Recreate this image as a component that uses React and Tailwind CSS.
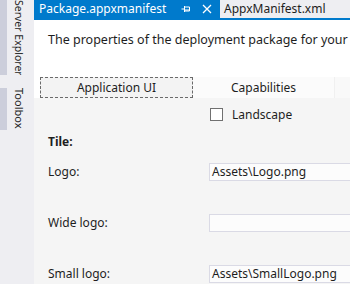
import React from "react";

const font = { fontFamily: '"Segoe UI", "Noto Sans", "Open Sans", sans-serif' };

function Field({ label, value, labelClass = "" }) {
  return (
    <div className="flex items-center h-[18px]">
      <div className={`w-[161px] shrink-0 text-[12px] text-[#1e1e1e] ${labelClass}`}>{label}</div>
      <div className="w-[160px] shrink-0 h-[18px] border border-[#dadae5] bg-[#fcfcfc] flex items-center pl-[2px] text-[12px] text-[#1e1e1e] leading-none">
        {value}
      </div>
    </div>
  );
}

export default function App() {
  return (
    <div className="w-[350px] h-[284px] overflow-hidden flex bg-[#eeeef2]" style={font}>
      {/* auto-hide strip */}
      <div className="w-[34px] shrink-0 flex flex-col bg-[#eeeef2]">
        <div className="h-[75px] flex border-l-[7px] border-[#cccedb] pl-[5px] overflow-hidden">
          <span className="text-[10.5px] leading-[14px] text-[#1e1e1e] [writing-mode:vertical-rl] whitespace-nowrap">
            Server Explorer
          </span>
        </div>
        <div className="mt-[13px] h-[42px] flex border-l-[7px] border-[#cccedb] pl-[5px]">
          <span className="text-[11px] leading-[14px] text-[#1e1e1e] [writing-mode:vertical-rl] whitespace-nowrap">
            Toolbox
          </span>
        </div>
      </div>

      {/* main document */}
      <div className="flex-1 flex flex-col min-w-0">
        <div className="h-[18px] flex shrink-0">
          <div className="w-[186px] shrink-0 bg-[#007acc] text-white flex items-center pl-[5px] text-[12px]">
            <span className="whitespace-nowrap">Package.appxmanifest</span>
            <span className="ml-auto mr-[8px] flex items-center gap-[11px]">
              <svg width="10" height="10" viewBox="0 0 10 10" fill="none" stroke="white" strokeWidth="1">
                <path d="M0.5 5h3M3.5 2v6M3.5 3h5M3.5 7h5M8.5 3v4M3.5 6h5" />
              </svg>
              <svg width="10" height="10" viewBox="0 0 10 10" fill="none" stroke="white" strokeWidth="1.3">
                <path d="M1 1l8 8M9 1l-8 8" />
              </svg>
            </span>
          </div>
          <div className="flex-1 bg-[#eeeef2] text-[#1e1e1e] flex items-center pl-[4px] text-[12px] whitespace-nowrap">
            AppxManifest.xml
          </div>
        </div>
        <div className="h-[2px] bg-[#007acc] shrink-0" />

        <div className="bg-white shrink-0 h-[57px] pl-[14px] pt-[11px]">
          <div className="text-[12.5px] text-[#1e1e1e] whitespace-nowrap">
            The properties of the deployment package for your app are contained in
          </div>
        </div>

        <div className="flex h-[21px] shrink-0 bg-white">
          <div className="w-[6px] bg-white" />
          <div className="w-[153px] border border-dashed border-[#6a6a6a] bg-[#f3f3f3] flex items-center justify-center text-[12px] text-[#1e1e1e]">
            Application UI
          </div>
          <div className="w-[141px] bg-[#fbfbfb] flex items-center justify-center text-[12px] text-[#1e1e1e]">
            Capabilities
          </div>
          <div className="flex-1 bg-[#f9f9f9] border-l border-[#f0f0f0]" />
        </div>

        <div className="flex-1 bg-[#f5f5f5] pl-[14px]">
          <div className="flex items-center h-[13px] mt-[10px] ml-[162px]">
            <div className="w-[13px] h-[13px] border border-[#707070] bg-white" />
            <span className="ml-[9px] text-[12px] text-[#1e1e1e]">Landscape</span>
          </div>
          <div className="mt-[13px] text-[12px] font-bold text-[#1e1e1e] h-[16px] leading-[16px]">Tile:</div>
          <div className="mt-[13px]">
            <Field label="Logo:" value="Assets\Logo.png" />
          </div>
          <div className="mt-[33px]">
            <Field label="Wide logo:" value="" />
          </div>
          <div className="mt-[33px]">
            <Field label="Small logo:" value="Assets\SmallLogo.png" />
          </div>
        </div>
      </div>
    </div>
  );
}
